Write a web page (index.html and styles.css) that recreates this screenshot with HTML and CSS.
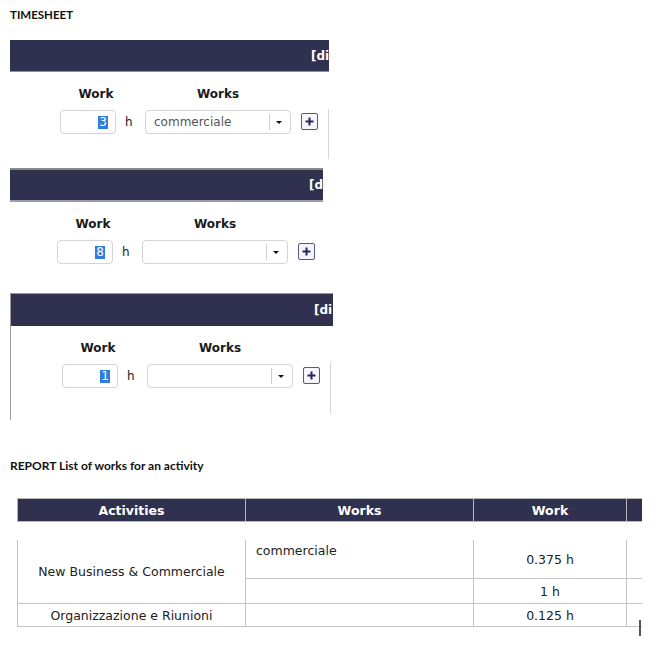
FILE: index.html
```html
<!DOCTYPE html>
<html>
<head>
<meta charset="utf-8">
<link rel="stylesheet" href="styles.css">
</head>
<body>
<h2 class="title t1">TIMESHEET</h2>

<section class="panel p1">
  <div class="bar"><span class="bar-text">[di</span></div>
  <div class="pbody">
    <div class="labels"><span class="lab lab-work">Work</span><span class="lab lab-works">Works</span></div>
    <div class="row">
      <div class="num"><span class="sel">3</span></div><span class="unit">h</span>
      <div class="select"><span class="val">commerciale</span><span class="sep"></span><span class="arrow"></span></div>
      <span class="plus"><svg width="9" height="9" viewBox="0 0 9 9"><path d="M4.5 0.5V8.5M0.5 4.5H8.5" stroke="#26265e" stroke-width="2"/></svg></span>
      <div class="next"></div>
    </div>
  </div>
</section>

<section class="panel p2">
  <div class="bar"><span class="bar-text">[d</span></div>
  <div class="pbody">
    <div class="labels"><span class="lab lab-work">Work</span><span class="lab lab-works">Works</span></div>
    <div class="row">
      <div class="num"><span class="sel">8</span></div><span class="unit">h</span>
      <div class="select"><span class="val"></span><span class="sep"></span><span class="arrow"></span></div>
      <span class="plus"><svg width="9" height="9" viewBox="0 0 9 9"><path d="M4.5 0.5V8.5M0.5 4.5H8.5" stroke="#26265e" stroke-width="2"/></svg></span>
      <div class="next"></div>
    </div>
  </div>
</section>

<section class="panel p3">
  <div class="bar"><span class="bar-text">[di</span></div>
  <div class="pbody">
    <div class="labels"><span class="lab lab-work">Work</span><span class="lab lab-works">Works</span></div>
    <div class="row">
      <div class="num"><span class="sel">1</span></div><span class="unit">h</span>
      <div class="select"><span class="val"></span><span class="sep"></span><span class="arrow"></span></div>
      <span class="plus"><svg width="9" height="9" viewBox="0 0 9 9"><path d="M4.5 0.5V8.5M0.5 4.5H8.5" stroke="#26265e" stroke-width="2"/></svg></span>
      <div class="next"></div>
    </div>
  </div>
</section>

<h2 class="title t2">REPORT List of works for an activity</h2>

<div class="report">
  <table class="rtable">
    <colgroup><col class="c1"><col class="c2"><col class="c3"><col class="c4"></colgroup>
    <thead>
      <tr class="hrow"><th>Activities</th><th>Works</th><th>Work</th><th></th></tr>
    </thead>
    <tbody>
      <tr class="spacer"><td></td><td></td><td></td><td></td></tr>
      <tr class="ra">
        <td rowspan="2" class="act">New Business &amp; Commerciale</td>
        <td class="wk">commerciale</td>
        <td class="hrs">0.375 h</td>
        <td></td>
      </tr>
      <tr class="rb"><td></td><td class="hrs">1 h</td><td></td></tr>
      <tr class="rc"><td class="act">Organizzazione e Riunioni</td><td></td><td class="hrs">0.125 h</td><td></td></tr>
    </tbody>
  </table>
  <span class="caret"></span>
</div>
</body>
</html>
```
FILE: styles.css
```css
html, body {
  margin: 0;
  padding: 0;
  background: #ffffff;
}
body {
  padding-left: 10px;
  font-family: "DejaVu Sans", Verdana, sans-serif;
  font-size: 12px;
  color: #222222;
}
.title {
  margin: 0;
  font-family: Lato, "Open Sans", sans-serif;
  font-weight: 700;
  font-size: 12px;
  line-height: 14px;
  color: #111111;
}
.t1 { padding-top: 8px; font-size: 11.5px; }
.t2 { margin-top: 39px; }

.panel {
  overflow: hidden;
  box-sizing: border-box;
}
.bar {
  background: #30304f;
  color: #ffffff;
  font-weight: 700;
  font-size: 12px;
  white-space: nowrap;
  display: flex;
  align-items: center;
  box-sizing: border-box;
}
.p1 { margin-top: 18px; width: 319px; }
.p1 .bar { height: 32px; padding-left: 301px; border-bottom: 1px solid #8e8ea6; }
.p1 .pbody { height: 96px; }
.p1 .labels, .p1 .row { padding-left: 50px; }

.p2 { width: 313px; border-top: 2px solid #8a8a8a; }
.p2 .bar { height: 32px; padding-left: 299px; border-bottom: 2px solid #9c9cb0; }
.p2 .pbody { height: 91px; }
.p2 .labels, .p2 .row { padding-left: 47px; }

.p3 { width: 323px; border-top: 1px solid #9a9a9a; border-left: 1px solid #9a9a9a; }
.p3 .bar { height: 32px; padding-left: 303px; }
.p3 .pbody { height: 94px; }
.p3 .labels, .p3 .row { padding-left: 51px; }

.labels {
  display: flex;
  padding-top: 14px;
  height: 16px;
  line-height: 16px;
}
.lab {
  flex-shrink: 0;
  font-weight: 700;
  text-align: center;
  color: #1a1a1a;
}
.lab-work { width: 72px; }
.lab-works { width: 146px; margin-left: 13px; }

.row {
  display: flex;
  align-items: flex-start;
  margin-top: 8px;
  white-space: nowrap;
}
.row > * { flex-shrink: 0; }
.num {
  width: 56px;
  height: 24px;
  box-sizing: border-box;
  border: 1px solid #d4d4d4;
  border-radius: 4px;
  display: flex;
  align-items: center;
  justify-content: flex-end;
  padding-right: 7px;
}
.sel {
  background: #2f7de0;
  color: #ffffff;
  line-height: 13px;
  padding: 0 1px;
}
.unit {
  width: 7px;
  margin-left: 9px;
  line-height: 24px;
}
.select {
  width: 146px;
  height: 24px;
  margin-left: 13px;
  box-sizing: border-box;
  border: 1px solid #d4d4d4;
  border-radius: 4px;
  display: flex;
  align-items: center;
  padding-left: 8px;
  color: #555555;
}
.val { flex: 1; }
.sep {
  width: 1px;
  height: 16px;
  background: #cfcfcf;
}
.arrow {
  width: 0;
  height: 0;
  margin: 0 8px 0 6px;
  border-left: 3px solid transparent;
  border-right: 3px solid transparent;
  border-top: 3px solid #111111;
}
.plus {
  width: 17px;
  height: 17px;
  margin-left: 10px;
  margin-top: 3px;
  box-sizing: border-box;
  border: 1px solid #56568a;
  border-radius: 2px;
  background: #f5f5fb;
  display: flex;
  align-items: center;
  justify-content: center;
}
.plus svg { display: block; }
.next {
  width: 12px;
  height: 51px;
  margin-left: 10px;
  margin-top: -3px;
  border-left: 1px solid #d8d8d8;
  border-top: 1px solid #eeeeee;
  border-top-left-radius: 4px;
}
.p3 .next { margin-top: -4px; height: 53px; }

.report {
  position: relative;
  margin-top: 25px;
  margin-left: 7px;
  width: 624px;
  height: 140px;
}
.rtable {
  border-collapse: collapse;
  table-layout: fixed;
  width: 624px;
  font-size: 12.5px;
  line-height: 15px;
}
.c1 { width: 228px; }
.c2 { width: 228px; }
.c3 { width: 153px; }
.c4 { width: 15px; }
.rtable th {
  background: #30304f;
  color: #ffffff;
  font-weight: 700;
  font-size: 12.5px;
  height: 22px;
  padding: 0;
  border: 1px solid #b8b8b8;
}
.rtable th:last-child { border-right: none; }
.rtable td {
  border: 1px solid #c4c4c4;
  padding: 0;
  text-align: center;
}
.rtable td:last-child { border-right: none; }
.spacer td {
  border: none;
  height: 18px;
}
.ra td { border-top: none; height: 35px; }
.rb td { height: 24px; }
.rc td { height: 22px; }
.act { vertical-align: middle; }
.hrs { vertical-align: middle; }
.rtable td.wk {
  text-align: left;
  vertical-align: top;
  padding: 3px 0 0 10px;
}
.caret {
  position: absolute;
  left: 622px;
  top: 122px;
  width: 2px;
  height: 16px;
  background: #555555;
}
```
